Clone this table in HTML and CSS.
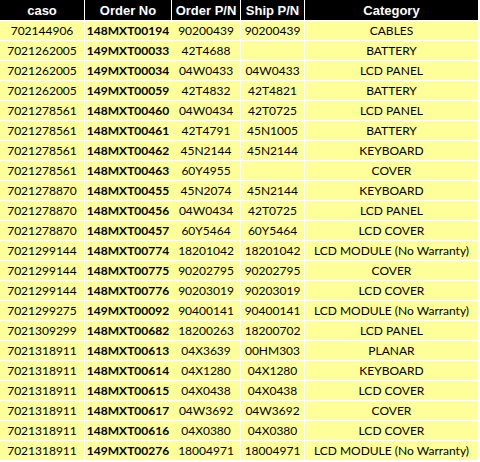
FILE: index.html
```html
<!DOCTYPE html>
<html>
<head>
<meta charset="utf-8">
<link rel="stylesheet" href="styles.css">
</head>
<body>
<div class="sheet">
  <div class="hd">caso</div><div class="hd">Order No</div><div class="hd">Order P/N</div><div class="hd">Ship P/N</div><div class="hd">Category</div>

  <div class="c">702144906</div><div class="c b">148MXT00194</div><div class="c">90200439</div><div class="c">90200439</div><div class="c">CABLES</div>
  <div class="c">7021262005</div><div class="c b">149MXT00033</div><div class="c">42T4688</div><div class="c"></div><div class="c">BATTERY</div>
  <div class="c">7021262005</div><div class="c b">149MXT00034</div><div class="c">04W0433</div><div class="c">04W0433</div><div class="c">LCD PANEL</div>
  <div class="c">7021262005</div><div class="c b">149MXT00059</div><div class="c">42T4832</div><div class="c">42T4821</div><div class="c">BATTERY</div>
  <div class="c">7021278561</div><div class="c b">148MXT00460</div><div class="c">04W0434</div><div class="c">42T0725</div><div class="c">LCD PANEL</div>
  <div class="c">7021278561</div><div class="c b">148MXT00461</div><div class="c">42T4791</div><div class="c">45N1005</div><div class="c">BATTERY</div>
  <div class="c">7021278561</div><div class="c b">148MXT00462</div><div class="c">45N2144</div><div class="c">45N2144</div><div class="c">KEYBOARD</div>
  <div class="c">7021278561</div><div class="c b">148MXT00463</div><div class="c">60Y4955</div><div class="c"></div><div class="c">COVER</div>
  <div class="c">7021278870</div><div class="c b">148MXT00455</div><div class="c">45N2074</div><div class="c">45N2144</div><div class="c">KEYBOARD</div>
  <div class="c">7021278870</div><div class="c b">148MXT00456</div><div class="c">04W0434</div><div class="c">42T0725</div><div class="c">LCD PANEL</div>
  <div class="c">7021278870</div><div class="c b">148MXT00457</div><div class="c">60Y5464</div><div class="c">60Y5464</div><div class="c">LCD COVER</div>
  <div class="c">7021299144</div><div class="c b">148MXT00774</div><div class="c">18201042</div><div class="c">18201042</div><div class="c">LCD MODULE (No Warranty)</div>
  <div class="c">7021299144</div><div class="c b">148MXT00775</div><div class="c">90202795</div><div class="c">90202795</div><div class="c">COVER</div>
  <div class="c">7021299144</div><div class="c b">148MXT00776</div><div class="c">90203019</div><div class="c">90203019</div><div class="c">LCD COVER</div>
  <div class="c">7021299275</div><div class="c b">149MXT00092</div><div class="c">90400141</div><div class="c">90400141</div><div class="c">LCD MODULE (No Warranty)</div>
  <div class="c">7021309299</div><div class="c b">148MXT00682</div><div class="c">18200263</div><div class="c">18200702</div><div class="c">LCD PANEL</div>
  <div class="c">7021318911</div><div class="c b">148MXT00613</div><div class="c">04X3639</div><div class="c">00HM303</div><div class="c">PLANAR</div>
  <div class="c">7021318911</div><div class="c b">148MXT00614</div><div class="c">04X1280</div><div class="c">04X1280</div><div class="c">KEYBOARD</div>
  <div class="c">7021318911</div><div class="c b">148MXT00615</div><div class="c">04X0438</div><div class="c">04X0438</div><div class="c">LCD COVER</div>
  <div class="c">7021318911</div><div class="c b">148MXT00617</div><div class="c">04W3692</div><div class="c">04W3692</div><div class="c">COVER</div>
  <div class="c">7021318911</div><div class="c b">148MXT00616</div><div class="c">04X0380</div><div class="c">04X0380</div><div class="c">LCD COVER</div>
  <div class="c">7021318911</div><div class="c b">149MXT00276</div><div class="c">18004971</div><div class="c">18004971</div><div class="c">LCD MODULE (No Warranty)</div>
</div>
</body>
</html>
```
FILE: styles.css
```css
html, body {
  margin: 0;
  padding: 0;
  background: #ffffff;
}
.sheet {
  display: grid;
  grid-template-columns: 84px 86px 68px 63px 173px;
  grid-template-rows: 20px;
  grid-auto-rows: 19px;
  gap: 1px;
  width: 478px;
  background: #ffffff;
}
.hd {
  background: #000000;
  color: #ffffff;
  font-family: "Liberation Sans", Arial, sans-serif;
  font-weight: bold;
  font-size: 13px;
  display: flex;
  align-items: center;
  justify-content: center;
  white-space: nowrap;
}
.c {
  background: #ffff99;
  color: #000000;
  font-family: Lato, "Open Sans", sans-serif;
  font-size: 12px;
  display: flex;
  align-items: center;
  justify-content: center;
  white-space: nowrap;
}
.b {
  font-weight: bold;
}
```
